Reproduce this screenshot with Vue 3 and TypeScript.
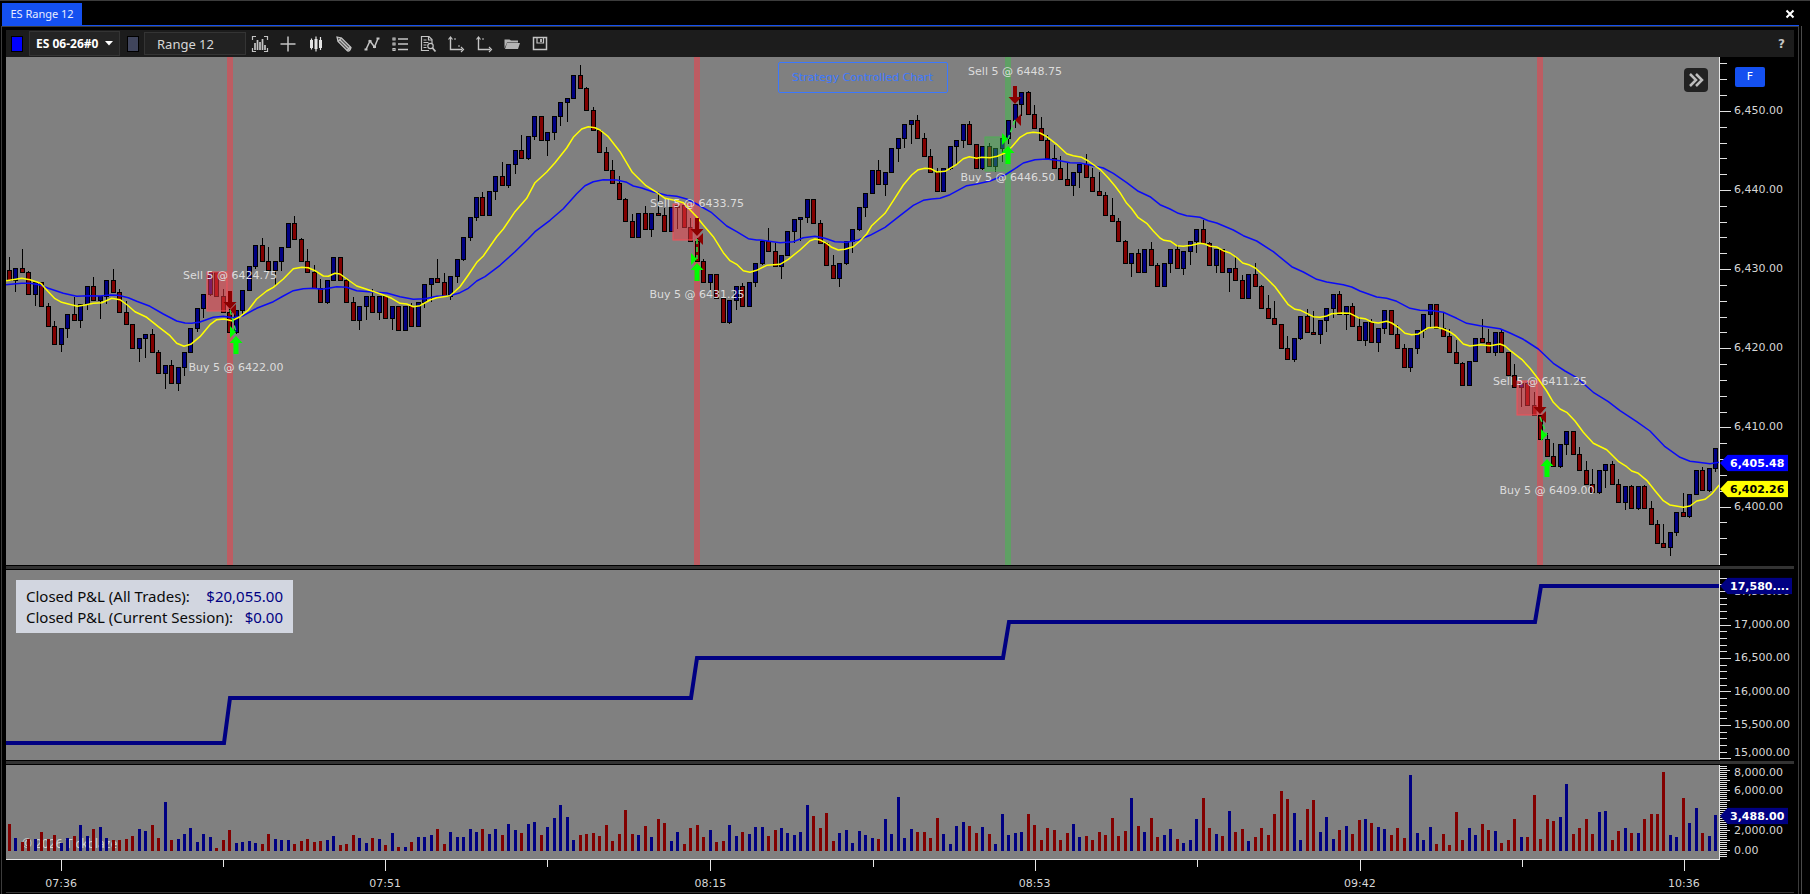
<script setup lang="ts">
import { ref } from 'vue'

type Run = [x: number, y: number, values: number[]]

const PLOT_LEFT = 6
const PLOT_WIDTH = 1713
const PRICE = { top: 57, height: 508 }
const PNL = { top: 570, height: 190 }
const VOLUME = { top: 765, height: 94 }
const BAR_PITCH = 6.489
const RANGE_HEIGHT = 71 / 3

const instrument = ref('ES 06-26#0')
const interval = ref('Range 12')

const barX = (i: number) => Math.floor(9.3 + i * BAR_PITCH)
const box = (p: { top: number; height: number }) => `${PLOT_LEFT} ${p.top} ${PLOT_WIDTH} ${p.height}`
const axisBox = (p: { top: number; height: number }) => `0 ${p.top} 12 ${p.height}`
const leftPct = (x: number) => `${((x - PLOT_LEFT) / PLOT_WIDTH) * 100}%`
const topPct = (y: number, p: { top: number; height: number }) => `${((y - p.top) / p.height) * 100}%`

// Closing levels in thirds of a unit, grouped in runs that share a vertical origin.
const closeRuns: [number, number[]][] = [
  [200, [
    241, 205, 217, 283, 247, 319, 379, 433, 385, 343, 361, 313, 259, 301, 287, 241, 277, 337, 373, 445,
    415, 403, 457, 520, 496, 550, 502, 457, 385, 325, 283, 217, 289, 337, 397, 331, 271, 199, 136, 184,
    211, 184, 142, 70, 118, 184, 217, 265, 307, 241, 172, 241, 307, 361, 319, 289, 337, 289, 355, 319, 391,
  ]],
  [50, [
    769, 829, 757, 703, 685, 697, 739, 679, 628, 562, 502, 442, 496, 424, 379, 406, 343, 301, 325, 259,
    199, 271, 247, 199, 157, 145, 76, 115, 181, 241, 307, 361, 400, 448, 514, 562, 490, 538, 490, 496,
    544, 472, 466, 532, 574, 634, 697, 673, 745, 817, 751, 709, 769, 697, 640, 574, 604, 649, 616, 544,
    508, 502, 448, 520, 580, 646, 685, 640, 574, 538, 472, 430, 361, 401, 367, 295, 265, 223, 211, 265,
    319, 367, 424, 355, 289, 271, 223, 283, 355, 289, 349, 295, 265, 211, 163, 127, 193, 235, 271, 325,
    355, 388, 406, 367, 343, 382, 424, 436, 496, 514, 574, 640, 610, 667, 598, 646, 709,
  ]],
  [180, [
    250, 208, 265, 214, 184, 148, 190, 256, 208, 277, 265, 301, 355, 283, 319, 385, 415, 433, 505, 538,
    475, 409, 457, 463, 421, 385, 343, 403, 379, 439, 481, 427, 487, 445, 391, 463, 505, 562, 505, 451,
    403, 373, 445, 469, 517, 550, 616, 544, 475,
  ]],
  [300, [
    127, 157, 97, 157, 226, 262, 250, 316, 346, 418, 469, 499, 433, 394, 463, 511, 553, 577, 511, 493,
    553, 607, 559, 625, 559, 625, 673, 730, 742, 697, 637, 649, 583, 511, 571, 505, 445,
  ]],
]

const closes = closeRuns.flatMap(([origin, values]) => values.map((v) => origin + v / 3))
const candles = closes.map((close, i) => {
  const open = i === 0 ? 200 + 211 / 3 : closes[i - 1]
  const up = close < open
  const high = up ? close : Math.min(open, close - RANGE_HEIGHT)
  const low = up ? Math.max(open, close + RANGE_HEIGHT) : close
  const bodyTop = Math.round(Math.min(open, close))
  const bodyBottom = Math.round(Math.max(open, close)) + 1
  return {
    x: barX(i),
    up,
    wickTop: Math.round(high),
    wickHeight: Math.round(low) - Math.round(high),
    bodyTop,
    bodyHeight: Math.max(3, bodyBottom - bodyTop),
  }
})

const volumeTops = [
  207, 249, 261, 252, 252, 231, 252, 240, 264, 249, 243, 210, 243, 222, 216, 249, 255, 255, 252, 243,
  222, 228, 210, 249, 141, 255, 252, 237, 219, 261, 237, 246, 279, 255, 225, 264, 261, 258, 264, 267,
  237, 252, 255, 255, 267, 258, 252, 261, 258, 255, 243, 270, 267, 240, 249, 264, 249, 252, 270, 234,
  276, 276, 261, 246, 246, 240, 222, 267, 231, 246, 246, 222, 231, 222, 237, 222, 240, 207, 225, 234,
  207, 201, 240, 216, 189, 150, 186, 255, 240, 237, 234, 243, 210, 258, 237, 165, 237, 240, 213, 246,
  192, 204, 258, 231, 267, 219, 210, 246, 225, 261, 258, 210, 243, 231, 237, 216, 216, 243, 225, 219,
  234, 240, 231, 150, 183, 219, 174, 258, 234, 225, 264, 228, 240, 249, 252, 192, 237, 126, 249, 222,
  231, 231, 249, 189, 237, 267, 213, 201, 213, 234, 216, 237, 267, 177, 240, 234, 231, 177, 210, 255,
  219, 225, 255, 234, 207, 246, 243, 255, 231, 240, 189, 243, 228, 129, 213, 231, 189, 246, 240, 222,
  252, 264, 255, 192, 129, 219, 237, 243, 168, 231, 222, 258, 246, 219, 240, 177, 108, 132, 174, 255,
  162, 135, 231, 186, 252, 225, 213, 237, 195, 192, 204, 216, 222, 240, 219, 249, 60, 234, 255, 216,
  267, 237, 270, 171, 255, 219, 240, 207, 225, 228, 264, 255, 192, 246, 246, 120, 252, 192, 198, 186,
  87, 237, 219, 192, 237, 171, 168, 255, 228, 219, 234, 234, 192, 177, 177, 51, 240, 246, 129, 204,
  159, 234, 243, 180,
]
const volumes = volumeTops.map((t, i) => ({ x: barX(i) - 1, height: (288 - t) / 3, up: candles[i].up }))

function curve(runs: Run[]): string {
  const pts: [number, number][] = []
  for (const [x0, y0, v] of runs) {
    for (let i = 0; i < v.length; i += 2) pts.push([x0 + v[i] / 3, y0 + v[i + 1] / 3])
  }
  return pts.map(([x, y]) => `${x.toFixed(1)},${y.toFixed(1)}`).join(' ')
}

const fastAverage = curve([
  [0, 200, [18, 242, 38, 239, 65, 235, 90, 239, 122, 250, 145, 275, 165, 296, 185, 307, 208, 313, 232, 319, 255, 315, 280, 310, 305, 308, 335, 295, 360, 299, 382, 315, 405, 335, 440, 352, 475, 380, 510, 407, 530, 430, 552, 439, 572, 433, 600, 410, 630, 374, 650, 359, 672, 357, 695, 362, 720, 350, 745, 330, 770, 297, 800, 273, 820, 262, 850, 237, 880, 206, 905, 202, 925, 203, 945, 212, 970, 228, 985, 229, 1005, 220, 1020, 222, 1045, 240, 1070, 258, 1100, 268, 1140, 281, 1175, 295]],
  [400, 50, [0, 760, 20, 762, 40, 770, 60, 767, 90, 750, 110, 743, 150, 737, 180, 710, 205, 675, 232, 635, 250, 618, 290, 560, 310, 537, 345, 485, 380, 445, 405, 398, 440, 366, 465, 338, 500, 294, 520, 262, 545, 237, 565, 230, 585, 233, 600, 240, 625, 260, 660, 305, 697, 367, 738, 407, 770, 427, 795, 445, 830, 452, 850, 458, 890, 500, 910, 525, 940, 560, 970, 608, 990, 632, 1010, 643, 1030, 662, 1050, 667, 1070, 661]],
  [760, 50, [0, 656, 20, 646, 60, 643, 85, 628, 120, 600, 150, 572, 165, 567, 180, 570, 200, 580, 215, 592, 235, 600, 255, 598, 280, 590, 300, 573, 320, 552, 335, 527, 375, 490, 400, 452, 430, 405, 455, 375, 475, 359, 495, 355, 512, 356, 530, 366, 555, 364, 590, 343, 610, 326, 628, 320, 650, 325, 665, 322, 690, 323, 712, 319, 735, 309, 755, 291, 780, 262, 800, 250, 820, 247, 840, 249, 860, 260, 890, 283, 920, 311, 940, 317, 965, 322, 985, 333, 1020, 358, 1045, 384, 1065, 408, 1080, 428, 1100, 460, 1115, 476, 1135, 503, 1160, 520, 1180, 543]],
  [1150, 180, [30, 174, 42, 181, 62, 184, 80, 197, 100, 199, 125, 196, 150, 190, 165, 192, 180, 199, 200, 201, 220, 212, 240, 219, 262, 234, 278, 249, 296, 254, 316, 264, 340, 286, 375, 320, 415, 374, 435, 388, 452, 391, 470, 400, 490, 410, 510, 412, 530, 408, 545, 401, 575, 399, 600, 400, 625, 413, 645, 416, 665, 426, 685, 429, 710, 424, 725, 429, 745, 442, 765, 460, 785, 464, 805, 462, 835, 443, 860, 442, 880, 447]],
  [1450, 300, [0, 96, 15, 106, 40, 132, 60, 138, 90, 134, 120, 137, 150, 132, 165, 138, 185, 155, 215, 178, 240, 205, 265, 237, 290, 273, 310, 307, 330, 327, 350, 337, 375, 363, 400, 397, 430, 430, 470, 449, 505, 484, 530, 500, 545, 513, 565, 520, 590, 541, 615, 572, 640, 602, 660, 615, 700, 622, 720, 618, 740, 603, 765, 598, 785, 582, 808, 555]],
])

const slowAverage = curve([
  [0, 200, [18, 254, 40, 252, 65, 250, 90, 250, 120, 255, 145, 265, 190, 280, 230, 289, 265, 287, 300, 288, 330, 285, 355, 286, 385, 293, 410, 304, 450, 319, 490, 342, 530, 363, 555, 369, 575, 370, 600, 366, 640, 352, 670, 349, 700, 353, 730, 347, 770, 325, 820, 305, 850, 288, 880, 272, 910, 266, 940, 265, 965, 268, 985, 265, 1010, 260, 1040, 262, 1070, 272, 1105, 275, 1160, 279]],
  [400, 50, [0, 740, 40, 748, 75, 746, 110, 739, 150, 737, 180, 728, 205, 715, 230, 693, 255, 680, 300, 646, 345, 605, 385, 566, 405, 545, 450, 511, 490, 476, 530, 431, 555, 407, 580, 395, 610, 389, 650, 390, 680, 397, 700, 408, 725, 414, 760, 426, 800, 436, 830, 439, 860, 447, 890, 462, 935, 488, 980, 528, 1010, 545, 1045, 566, 1070, 570]],
  [760, 50, [0, 570, 60, 578, 100, 575, 130, 563, 165, 559, 195, 565, 225, 575, 260, 577, 295, 570, 330, 556, 375, 532, 420, 497, 460, 466, 490, 451, 515, 447, 540, 445, 570, 434, 620, 407, 650, 402, 690, 393, 735, 375, 765, 356, 790, 339, 825, 329, 860, 327, 900, 332, 930, 338, 960, 339, 990, 345, 1030, 354, 1060, 370, 1100, 398, 1135, 424, 1170, 440]],
  [1150, 180, [30, 74, 60, 87, 85, 100, 110, 107, 150, 112, 175, 122, 200, 129, 250, 150, 280, 167, 320, 183, 370, 215, 425, 260, 460, 276, 500, 298, 530, 306, 580, 314, 605, 321, 630, 333, 680, 351, 710, 355, 740, 364, 780, 385, 810, 391, 850, 392, 880, 397]],
  [1450, 300, [0, 46, 20, 55, 50, 70, 90, 77, 150, 86, 180, 99, 220, 118, 265, 147, 310, 190, 345, 213, 380, 233, 430, 277, 475, 305, 510, 332, 560, 365, 600, 393, 645, 440, 690, 472, 720, 484, 745, 487, 780, 491, 808, 487]],
])

interface Trade {
  side: 'short' | 'long'
  band: number
  zone: [number, number, number, number]
  sell: { x: number; tip: number; entry: number; label: string; labelY: number }
  buy: { x: number; tip: number; entry: number; label: string; labelY: number }
}

const trades: Trade[] = [
  {
    side: 'short', band: 227, zone: [207, 272, 20, 39],
    sell: { x: 230, tip: 309, entry: 310, label: 'Sell 5 @ 6424.75', labelY: 276 },
    buy: { x: 236, tip: 336, entry: 332, label: 'Buy 5 @ 6422.00', labelY: 368 },
  },
  {
    side: 'short', band: 694, zone: [673, 204, 20, 36],
    sell: { x: 697, tip: 236, entry: 239, label: 'Sell 5 @ 6433.75', labelY: 204 },
    buy: { x: 697, tip: 263, entry: 259, label: 'Buy 5 @ 6431.25', labelY: 295 },
  },
  {
    side: 'long', band: 1005, zone: [985, 137, 20, 34],
    sell: { x: 1015, tip: 104, entry: 120, label: 'Sell 5 @ 6448.75', labelY: 72 },
    buy: { x: 1008, tip: 146, entry: 139, label: 'Buy 5 @ 6446.50', labelY: 178 },
  },
  {
    side: 'short', band: 1537, zone: [1517, 381, 20, 34],
    sell: { x: 1540, tip: 414, entry: 417, label: 'Sell 5 @ 6411.25', labelY: 382 },
    buy: { x: 1547, tip: 459, entry: 435, label: 'Buy 5 @ 6409.00', labelY: 491 },
  },
]

interface Tick { y: number; major: boolean }
function ticks(first: number, last: number, zero: number, step: number, every: number): Tick[] {
  const out: Tick[] = []
  for (let n = Math.ceil((zero - last) / step); zero - n * step >= first; n++) {
    out.push({ y: Math.round(zero - n * step), major: n % every === 0 })
  }
  return out
}
const priceTicks = ticks(62, 560, 506.5, 15.824, 5)
const pnlTicks = ticks(571, 759, 758.3, 6.69, 5)
const volumeTicks = ticks(766, 857, 850.4, 2.004, 5)

const priceLabels = [6450, 6440, 6430, 6420, 6410, 6400].map((v, i) => ({
  text: `6,${String(v).slice(1)}.00`,
  y: 111 + i * 79.12,
}))
const pnlLabels = [
  { text: '17,500.00', y: 592 },
  { text: '17,000.00', y: 625 },
  { text: '16,500.00', y: 658 },
  { text: '16,000.00', y: 692 },
  { text: '15,500.00', y: 725 },
  { text: '15,000.00', y: 753 },
]
const volumeLabels = [
  { text: '8,000.00', y: 773 },
  { text: '6,000.00', y: 791 },
  { text: '2,000.00', y: 831 },
  { text: '0.00', y: 851 },
]

const timeLabels = ['07:36', '07:51', '08:15', '08:53', '09:42', '10:36'].map((text, i) => ({
  text,
  x: barX(8 + i * 50),
}))
const timeMinor = [33, 83, 133, 183, 233].map(barX)

const tools = ['Chart style', 'Crosshair', 'Bar type', 'Draw', 'Indicators', 'Series list', 'Data window', 'Scale X', 'Scale Y', 'Open', 'Save']
</script>

<template>
  <div class="window">
    <header class="tabs">
      <button class="tab" type="button">ES Range 12</button>
      <button class="close" type="button" aria-label="Close">
        <svg viewBox="0 0 10 10" width="10" height="10"><path d="M1.5 1.5 8.5 8.5M8.5 1.5 1.5 8.5" stroke="#fff" stroke-width="2" /></svg>
      </button>
    </header>

    <main class="frame">
      <div class="toolbar">
        <button class="swatch blue" type="button" aria-label="Link colour"></button>
        <span class="combo">
          <select v-model="instrument" aria-label="Instrument"><option>ES 06-26#0</option></select>
          <svg viewBox="0 0 8 5" width="8" height="5"><path d="M0 0h8L4 4.500z" fill="#fff" /></svg>
        </span>
        <button class="swatch slate" type="button" aria-label="Interval link"></button>
        <input v-model="interval" class="interval" type="text" aria-label="Interval" />
        <div class="tools">
          <button v-for="(tool, i) in tools" :key="tool" type="button" :aria-label="tool">
            <svg viewBox="0 0 20 20" width="20" height="20" fill="none" stroke="#c4c4c4" stroke-width="1.2">
              <template v-if="i === 0">
                <path d="M2.500 6V2.500H6M14 2.500h3.500V6M2.500 14v3.500H6M14 17.500h3.500V14" />
                <path d="M5 16V9M7.500 16V6M10 16V8M12.500 16V5M15 16v-5" stroke-width="1.700" />
              </template>
              <path v-else-if="i === 1" d="M10 2.500v15M2.500 10h15" stroke-width="1.500" />
              <template v-else-if="i === 2">
                <path d="M5.500 6v8M10 5v10M14.500 6v8" stroke="#e4e4e4" stroke-width="3" />
                <path d="M5.500 4.500v11M10 2.500v15M14.500 3v13" stroke="#e4e4e4" />
              </template>
              <template v-else-if="i === 3">
                <path d="M3 3l1 4.500 9.500 9.500q2.500.5 3.500-3.500L7.500 4z" fill="#555" />
                <path d="M4 7.500 7.500 4M6 6l9.500 9.500M13 16.500l3.500-3.500" />
              </template>
              <template v-else-if="i === 4">
                <path d="M4 15.500 8 7l4.500 6L16 4.500" stroke-width="1.500" />
                <path d="M2.500 15.500h3M6.500 7h3M11 13h3M14.500 4.500h3" stroke-width="2.200" />
              </template>
              <template v-else-if="i === 5">
                <path d="M8 5h10M8 10h10M8 15.500h10" stroke-width="1.500" />
                <path d="M3 4h2v2H3zM3 9h2v2H3zM3 14.500h2v2H3z" />
              </template>
              <template v-else-if="i === 6">
                <path d="M11 16.500H3.500v-14H11l3 3v4" /><path d="M10.500 3v3H14M5.500 6h3M5.500 8.500h5M5.500 11h3M5.500 13.500h3" />
                <circle cx="12.500" cy="12" r="2.700" /><path d="M14.500 14l3 3.500" stroke-width="1.800" />
              </template>
              <template v-else-if="i === 7">
                <path d="M4.500 4v11.500H16" stroke-width="1.400" /><path d="M2.500 5.500l2-2.500 2 2.500M15 13l2.500 2.500L15 18" /><path d="M8 5h2M12 12h2" />
              </template>
              <template v-else-if="i === 8">
                <path d="M4.500 4v11.500H16" stroke-width="1.400" /><path d="M2.500 5.500l2-2.500 2 2.500M15 13l2.500 2.500L15 18" /><path d="M8 5h2" />
              </template>
              <path v-else-if="i === 9" d="M2.500 14.500v-9h5l1.500 1H16v2H5zM5 9h13l-2 6H3z" fill="#b5b5b5" stroke="none" />
              <template v-else>
                <path d="M3.500 3.500h13v12h-13z" stroke-width="1.500" /><path d="M7 3.500V9h6.500V3.500" /><path d="M11 5v3" stroke-width="1.800" />
              </template>
            </svg>
          </button>
        </div>
        <button class="help" type="button" aria-label="Help">?</button>
      </div>

      <section class="row price-row">
        <div class="plot">
          <svg :viewBox="box(PRICE)" preserveAspectRatio="none">
            <rect v-for="t in trades" :key="t.band" :x="t.band" y="57" width="6" height="508" :class="['band', t.side]" />
            <g shape-rendering="crispEdges">
              <g v-for="c in candles" :key="c.x">
                <rect :x="c.x" :y="c.wickTop" width="1" :height="c.wickHeight" fill="#000" />
                <rect :x="c.x - 2" :y="c.bodyTop" width="5" :height="c.bodyHeight" fill="#000" />
                <rect :x="c.x - 1" :y="c.bodyTop + 1" width="3" :height="c.bodyHeight - 2" :class="c.up ? 'up' : 'down'" />
              </g>
            </g>
            <rect
              v-for="t in trades" :key="t.band"
              :x="t.zone[0]" :y="t.zone[1]" :width="t.zone[2]" :height="t.zone[3]" :class="['zone', t.side]"
            />
            <polyline class="average slow" :points="slowAverage" />
            <polyline class="average fast" :points="fastAverage" />
            <g v-for="t in trades" :key="t.band">
              <path class="sell" :d="`M${t.sell.x} ${t.sell.tip}l-6.500 -7h4.500v-11h4v11h4.500z`" />
              <path class="sell" :d="`M${t.sell.x} ${t.sell.entry}l6 -6v12z`" />
              <path class="link" :d="`M${t.sell.x} ${t.sell.entry}L${t.buy.x} ${t.buy.entry}`" />
              <path class="buy" :d="`M${t.buy.x} ${t.buy.entry}l-6 -6v12z`" />
              <path class="buy" :d="`M${t.buy.x} ${t.buy.tip}l-6.500 7h4v11h5v-11h4z`" />
            </g>
          </svg>
          <template v-for="t in trades" :key="t.band">
            <span class="mark" :style="{ left: leftPct(t.sell.x), top: topPct(t.sell.labelY, PRICE) }">{{ t.sell.label }}</span>
            <span class="mark" :style="{ left: leftPct(t.buy.x), top: topPct(t.buy.labelY, PRICE) }">{{ t.buy.label }}</span>
          </template>
          <button class="strategy" type="button">Strategy Controlled Chart</button>
          <button class="forward" type="button" aria-label="Jump to latest bar">
            <svg viewBox="0 0 24 24" width="24" height="24" fill="none" stroke="#bdbdbd" stroke-width="2.500"><path d="M6 6l6 6-6 6M12 6l6 6-6 6" /></svg>
          </button>
        </div>
        <div class="axis">
          <svg :viewBox="axisBox(PRICE)" preserveAspectRatio="none">
            <rect v-for="t in priceTicks" :key="t.y" x="0" :y="t.y" :width="t.major ? 11 : 7" height="1" />
          </svg>
          <span v-for="l in priceLabels" :key="l.text" class="level" :style="{ top: topPct(l.y, PRICE) }">{{ l.text }}</span>
          <span class="tag slow-tag" :style="{ top: topPct(463, PRICE) }">6,405.48</span>
          <span class="tag fast-tag" :style="{ top: topPct(489, PRICE) }">6,402.26</span>
          <button class="fixed" type="button">F</button>
        </div>
      </section>

      <div class="splitter"></div>

      <section class="row pnl-row">
        <div class="plot">
          <svg :viewBox="box(PNL)" preserveAspectRatio="none">
            <polyline class="pnl" points="6,743 224,743 230,698 691,698 697,658 1003,658 1009,622 1535,622 1541,586 1719,586" />
          </svg>
          <dl class="summary">
            <div><dt>Closed P&amp;L (All Trades):</dt><dd>$20,055.00</dd></div>
            <div><dt>Closed P&amp;L (Current Session):</dt><dd>$0.00</dd></div>
          </dl>
        </div>
        <div class="axis">
          <svg :viewBox="axisBox(PNL)" preserveAspectRatio="none">
            <rect v-for="t in pnlTicks" :key="t.y" x="0" :y="t.y" :width="t.major ? 11 : 7" height="1" />
          </svg>
          <span v-for="l in pnlLabels" :key="l.text" class="level" :style="{ top: topPct(l.y, PNL) }">{{ l.text }}</span>
          <span class="tag navy-tag wide" :style="{ top: topPct(586, PNL) }">17,580....</span>
        </div>
      </section>

      <div class="splitter"></div>

      <section class="row volume-row">
        <div class="plot">
          <span class="watermark">© 2026 Tickblaze</span>
          <svg :viewBox="box(VOLUME)" preserveAspectRatio="none" shape-rendering="crispEdges">
            <rect v-for="v in volumes" :key="v.x" :x="v.x" :y="851 - v.height" width="3" :height="v.height" :class="v.up ? 'up' : 'down'" />
          </svg>
        </div>
        <div class="axis">
          <svg :viewBox="axisBox(VOLUME)" preserveAspectRatio="none">
            <rect v-for="t in volumeTicks" :key="t.y" x="0" :y="t.y" :width="t.major ? 10 : 7" height="1" />
          </svg>
          <span v-for="l in volumeLabels" :key="l.text" class="level" :style="{ top: topPct(l.y, VOLUME) }">{{ l.text }}</span>
          <span class="tag navy-tag" :style="{ top: topPct(816, VOLUME) }">3,488.00</span>
        </div>
      </section>

      <footer class="times">
        <div class="time-plot">
          <svg :viewBox="`${PLOT_LEFT} 0 ${PLOT_WIDTH} 32`" preserveAspectRatio="none" shape-rendering="crispEdges">
            <rect v-for="x in timeMinor" :key="x" :x="x" y="0" width="1" height="7" />
            <rect v-for="l in timeLabels" :key="l.x" :x="l.x" y="0" width="1" height="11" />
          </svg>
          <span v-for="l in timeLabels" :key="l.text" class="time" :style="{ left: leftPct(l.x) }">{{ l.text }}</span>
        </div>
      </footer>
    </main>
  </div>
</template>

<style>
html,
body {
  background: #000;
}
</style>

<style scoped>
.window {
  box-sizing: border-box;
  display: flex;
  flex-direction: column;
  height: 100vh;
  min-height: 480px;
  padding-right: 11px;
  border-top: 1px solid #3c3c3c;
  background: #000;
  color: #d6d6d6;
  font: 11px/14px "DejaVu Sans", Verdana, sans-serif;
  overflow: hidden;
}
button,
input,
select {
  margin: 0;
  padding: 0;
  border: 0;
  background: none;
  color: inherit;
  font: inherit;
}
svg {
  display: block;
}
.tabs {
  flex: none;
  display: flex;
  justify-content: space-between;
  box-sizing: border-box;
  height: 25px;
  margin-left: 2px;
  padding-top: 2px;
  border-bottom: 1px solid #1450f0;
}
.tab {
  width: 80px;
  background: #1450f0;
  color: #e8ecff;
  font: 11px/20px "Noto Sans", "Segoe UI", sans-serif;
  white-space: nowrap;
}
.close {
  width: 10px;
  margin-right: 4px;
}
.frame {
  flex: 1;
  display: flex;
  flex-direction: column;
  min-height: 0;
  margin-left: 1px;
  padding: 3px 4px 1px;
  border: 1px solid #3c3c3c;
  border-bottom: 0;
  box-shadow: 2px 0 0 #000, 3px 0 0 #4a4a4a;
}
.toolbar {
  flex: none;
  display: flex;
  align-items: center;
  height: 27px;
  padding: 0 9px 0 5px;
  background: #1c1c1c;
}
.swatch {
  width: 12px;
  height: 16px;
  border: 1px solid #000;
}
.blue {
  background: #00f;
}
.slate {
  margin-left: 7px;
  background: #40455c;
}
.combo {
  display: flex;
  align-items: center;
  box-sizing: border-box;
  width: 91px;
  height: 25px;
  margin-left: 6px;
  padding: 0 6px;
  border: 1px solid #343434;
  background: #242424;
}
.combo select {
  flex: 1;
  min-width: 0;
  appearance: none;
  color: #fff;
  font: bold 12px/16px "Open Sans", "Segoe UI", sans-serif;
}
.combo svg {
  flex: none;
}
.interval {
  box-sizing: border-box;
  width: 102px;
  height: 23px;
  margin-left: 5px;
  padding-left: 12px;
  border: 1px solid #343434;
  background: #222;
  font: 13px/18px "Noto Sans", "Segoe UI", sans-serif;
}
.tools {
  display: flex;
  gap: 8px;
  margin-left: 4px;
}
.help {
  margin-left: auto;
  color: #c4c4c4;
  font-weight: bold;
  font-size: 12px;
}
.row {
  display: grid;
  grid-template-columns: minmax(0, 1fr) 75px;
  min-height: 0;
}
.price-row {
  flex: 508 1 0;
}
.pnl-row {
  flex: 190 1 0;
}
.volume-row {
  flex: 94 1 0;
}
.plot {
  position: relative;
  background: #808080;
  overflow: hidden;
}
.plot svg {
  position: relative;
  width: 100%;
  height: 100%;
}
.axis {
  position: relative;
  border-left: 1px solid #e6e6e6;
  overflow: hidden;
}
.axis > svg {
  width: 12px;
  height: 100%;
  fill: #e0e0e0;
}
.band.short {
  fill: rgba(250, 56, 68, 0.5);
}
.band.long {
  fill: rgba(45, 208, 58, 0.4);
}
.zone.short {
  fill: rgba(250, 60, 70, 0.5);
  stroke: #f2505a;
}
.zone.long {
  fill: rgba(60, 190, 70, 0.4);
  stroke: #4fae55;
}
.up {
  fill: #000082;
}
.down {
  fill: #820000;
}
.average {
  fill: none;
  stroke-width: 1.5;
  stroke-linejoin: round;
}
.slow {
  stroke: #0a0af8;
}
.fast {
  stroke: #ff0;
}
.sell {
  fill: #8b0000;
}
.buy {
  fill: #0f0;
}
.link {
  fill: none;
  stroke: #32e04b;
  stroke-width: 1.5;
  stroke-dasharray: 5 3;
}
.mark {
  position: absolute;
  transform: translate(-50%, -50%);
  color: #dcdcdc;
  white-space: nowrap;
}
.strategy {
  position: absolute;
  top: 5px;
  left: 50%;
  transform: translateX(-50%);
  width: 170px;
  height: 31px;
  border: 1px solid #3c78ff;
  border-radius: 2px;
  color: #3c78ff;
  white-space: nowrap;
}
.forward {
  position: absolute;
  top: 11px;
  right: 11px;
  width: 24px;
  height: 24px;
  border-radius: 4px;
  background: #222;
}
.level {
  position: absolute;
  left: 14px;
  transform: translateY(-50%);
  white-space: nowrap;
}
.tag {
  position: absolute;
  left: 0;
  box-sizing: border-box;
  width: 68px;
  padding-left: 10px;
  transform: translateY(-50%);
  clip-path: polygon(0 50%, 8px 0, 100% 0, 100% 100%, 8px 100%);
  font-weight: bold;
  line-height: 17px;
  white-space: nowrap;
}
.slow-tag {
  background: #00f;
  color: #fff;
}
.fast-tag {
  background: #ff0;
  color: #000;
}
.navy-tag {
  background: #000082;
  color: #fff;
}
.wide {
  width: 72px;
}
.fixed {
  position: absolute;
  top: 10px;
  left: 15px;
  width: 30px;
  height: 20px;
  border-radius: 2px;
  background: #1450f0;
  color: #fff;
}
.splitter {
  flex: none;
  box-sizing: border-box;
  height: 5px;
  border-top: 1px solid #000;
  border-bottom: 1px solid #000;
  background: #333;
}
.pnl {
  fill: none;
  stroke: #000082;
  stroke-width: 4;
}
.summary {
  position: absolute;
  top: 10px;
  left: 10px;
  box-sizing: border-box;
  width: 277px;
  height: 53px;
  margin: 0;
  padding: 6px 10px;
  background: #d2d6e0;
  color: #0a0a0a;
  font: 15px/21px "Noto Sans", "Segoe UI", sans-serif;
}
.summary div {
  display: flex;
  justify-content: space-between;
  white-space: nowrap;
}
.summary dd {
  margin: 0;
  color: #000082;
}
.watermark {
  position: absolute;
  bottom: 6px;
  left: 16px;
  color: #d4d4d4;
  font: 12px/18px "Noto Sans", "Segoe UI", sans-serif;
}
.times {
  flex: none;
  height: 33px;
  padding-right: 74px;
  border-bottom: 1px solid #333;
}
.time-plot {
  position: relative;
  height: 32px;
  border-top: 1px solid #e6e6e6;
}
.time-plot svg {
  width: 100%;
  height: 32px;
  fill: #e6e6e6;
}
.time {
  position: absolute;
  top: 17px;
  transform: translateX(-50%);
}
</style>
